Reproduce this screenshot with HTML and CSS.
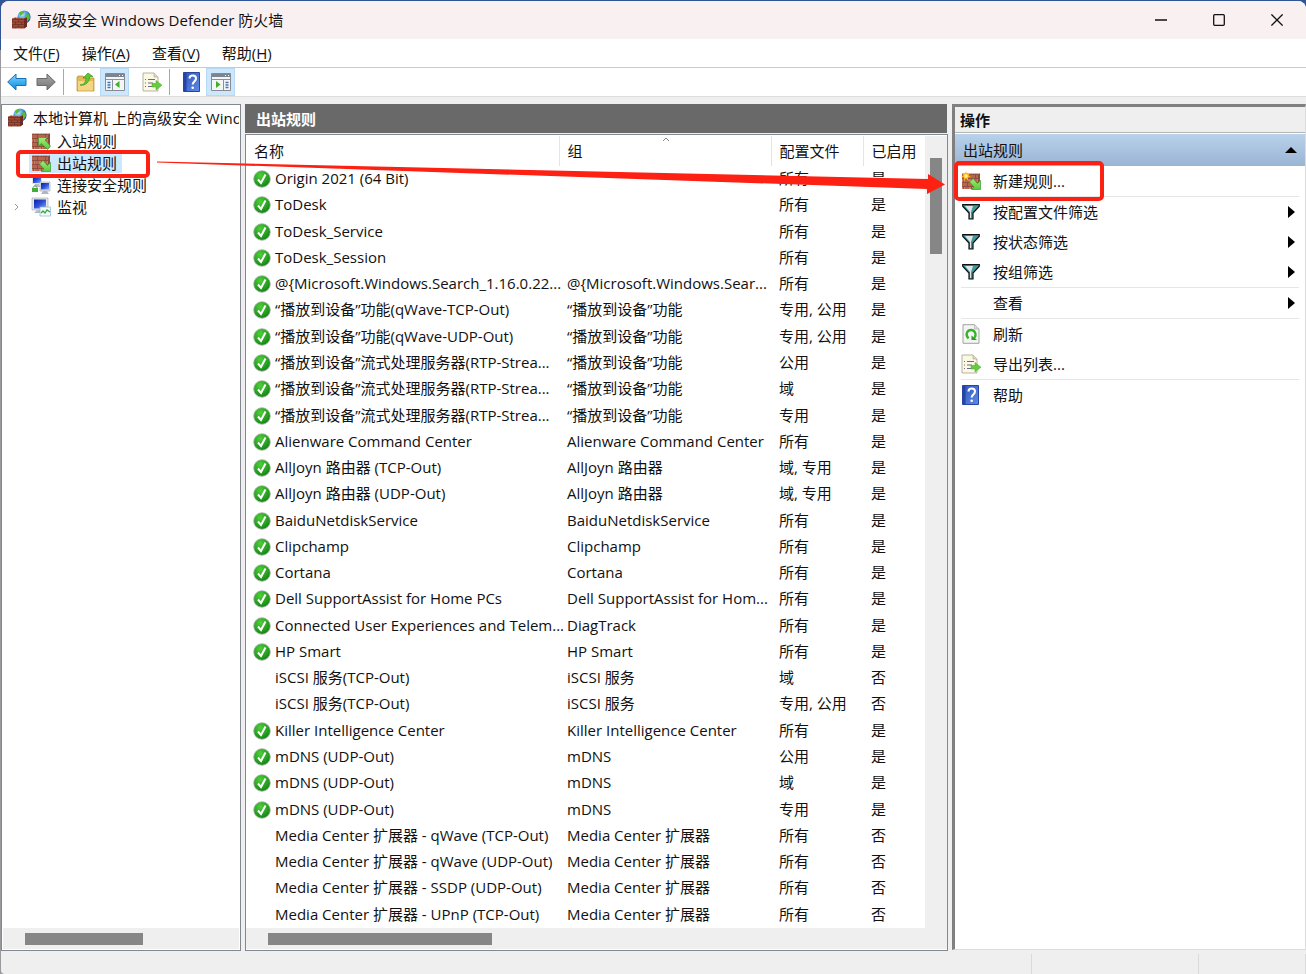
FILE: index.html
```html
<!DOCTYPE html>
<html lang="zh-CN">
<head>
<meta charset="utf-8">
<title>高级安全 Windows Defender 防火墙</title>
<link rel="stylesheet" href="styles.css">
</head>
<body>
<svg class="defs" aria-hidden="true">
  <defs>
    <linearGradient id="gBlue" x1="0" y1="0" x2="0" y2="1"><stop offset="0" stop-color="#8fd6fa"/><stop offset=".5" stop-color="#3db0f2"/><stop offset="1" stop-color="#1683d2"/></linearGradient>
    <linearGradient id="gGray" x1="0" y1="0" x2="0" y2="1"><stop offset="0" stop-color="#a8a8a8"/><stop offset="1" stop-color="#747474"/></linearGradient>
    <radialGradient id="gGlobe" cx=".35" cy=".3" r=".8"><stop offset="0" stop-color="#c9eefc"/><stop offset=".5" stop-color="#3b93dc"/><stop offset="1" stop-color="#123f96"/></radialGradient>
    <radialGradient id="gOk" cx=".4" cy=".3" r=".8"><stop offset="0" stop-color="#4fd03a"/><stop offset="1" stop-color="#0c7a10"/></radialGradient>
    <linearGradient id="gHelp" x1="0" y1="0" x2="1" y2="1"><stop offset="0" stop-color="#2f56be"/><stop offset="1" stop-color="#5f8ae6"/></linearGradient>
    <linearGradient id="gGreen" x1="0" y1="0" x2="0" y2="1"><stop offset="0" stop-color="#a4ec7c"/><stop offset="1" stop-color="#5cc63c"/></linearGradient>
    <linearGradient id="gScreen" x1="0" y1="0" x2="1" y2="1"><stop offset="0" stop-color="#0c1fa0"/><stop offset=".5" stop-color="#2c50d8"/><stop offset="1" stop-color="#8aaaf4"/></linearGradient>
    <pattern id="brick" width="8" height="8" patternUnits="userSpaceOnUse">
      <rect width="8" height="8" fill="#b4664f"/><rect width="4" height="4" fill="#cc8068"/><path d="M0 3.500h8M0 7.500h8M2.500 0v3.500M6.500 4v3.500" stroke="#8a4436" stroke-width=".8"/>
    </pattern>
    <pattern id="brickDark" width="6" height="5" patternUnits="userSpaceOnUse">
      <rect width="6" height="5" fill="#a04c38"/><path d="M0 2h6M0 4.500h6M1.500 0v2M4.500 2v2.500" stroke="#6a2c20" stroke-width=".7"/>
    </pattern>
  </defs>
  <symbol id="firewall" viewBox="0 0 20 20">
    <circle cx="13" cy="7" r="6.600" fill="url(#gGlobe)"/>
    <path d="M8 3c2-2 4-2 6-2l-2 3-3 2zM14 5l4-1 1 4-3 4-2-3z" fill="#5cba3e"/>
    <path d="M1 8.500l3-1 9 1 3-1v9l-3 2H1z" fill="url(#brickDark)"/><path d="M13 8.500l3-1v9l-3 2z" fill="#6c2c20"/>
  </symbol>
  <symbol id="wall" viewBox="0 0 20 20"><path d="M1 2.500h18v13l-2 2.500H1z" fill="url(#brick)"/><path d="M17 4l2-1.500v13L17 18z" fill="#8c4a3b"/></symbol>
  <symbol id="inbound" viewBox="0 0 20 20"><use href="#wall"/><path d="M7.500 6.500h9L14 9l5.500 6-3 3.500-6-6L7.500 15z" fill="url(#gGreen)" stroke="#3c9a28" stroke-width=".7"/></symbol>
  <symbol id="outbound" viewBox="0 0 20 20"><use href="#wall"/><path d="M19.500 18.500h-9l2.500-2.500-4.500-5L12 7.500l4.500 5 3-3z" fill="url(#gGreen)" stroke="#3c9a28" stroke-width=".7"/></symbol>
  <symbol id="newrule" viewBox="0 0 20 20"><use href="#outbound"/><path d="M5 0l1 3 3-1-1.500 2.500L10 6 7 6.500 7.500 10 5 7.500 2.500 10 3 6.500 0 6l2.500-1.500L1 2l3 1z" fill="#ffb61c"/><circle cx="5" cy="5" r="1.700" fill="#fff2a0"/></symbol>
  <symbol id="connsec" viewBox="0 0 20 20">
    <path d="M1 1h10v8H1z" fill="#dfe4ea"/><path d="M2 2h8v6H2z" fill="url(#gScreen)"/><path d="M4 9h4l1 3H3z" fill="#b4bcc4"/>
    <path d="M9 7h10v9H9z" fill="#dfe4ea" stroke="#9aa4b0" stroke-width=".6"/><path d="M10 8h8v6.500h-8z" fill="url(#gScreen)"/><path d="M12 16h4l2 3h-8z" fill="#aeb6be"/>
    <path d="M1 13h6v4H1z" fill="#45ae33"/><path d="M2 13c0-3 4-3 4 0" fill="none" stroke="#7a9a7a"/>
  </symbol>
  <symbol id="monitor" viewBox="0 0 20 20">
    <path d="M1 1h16v12H1z" fill="#e4e6ea" stroke="#a0a8b4" stroke-width=".6"/><path d="M3 2.500h12v9H3z" fill="url(#gScreen)"/><path d="M6 13h5l1 3H3z" fill="#b4bcc4"/>
    <path d="M9 10h10.500v9H9z" fill="#f2faff" stroke="#8db6c8" stroke-width=".7"/><path d="M10 16l2-2 2 2 2-3 3 2" fill="none" stroke="#35a83a" stroke-width="1.300"/>
  </symbol>
  <symbol id="back" viewBox="0 0 20 18"><path d="M.7 9L9 1v4.500h10v7H9V17z" fill="url(#gBlue)" stroke="#1673b4" stroke-linejoin="round"/></symbol>
  <symbol id="forward" viewBox="0 0 20 18"><path d="M19.300 9L11 1v4.500H1v7h10V17z" fill="url(#gGray)" stroke="#6b6b6b" stroke-linejoin="round"/></symbol>
  <symbol id="folder" viewBox="0 0 20 20"><path d="M1 5l1-1h5l2 2h9v13H1z" fill="#e3b955" stroke="#b88d35" stroke-width=".7"/><path d="M2 9h15v9.500H2z" fill="#f3d583"/><path d="M4 13c4 0 6-3 6-7H7l5-5 5 3.500-3.500.5c0 5-4 9-9.500 8z" fill="#5cc932" stroke="#2c8a18" stroke-width=".6"/></symbol>
  <symbol id="paneleft" viewBox="0 0 20 18"><path d="M.5.500h19v17H.5z" fill="#f4f5f7" stroke="#858b92"/><path d="M1 1h18v3H1z" fill="#7c858f"/><path d="M14 2.500h1m2 0h1" stroke="#fff"/><path d="M1 6.500h18" stroke="#8a929b"/><path d="M7.500 7v10" stroke="#8a929b"/><path d="M2.500 9.500h3m-3 2.500h3m-3 2.500h3" stroke="#3a73b4" stroke-width="1.300"/><path d="M14.500 8v7L10 11.500z" fill="#3eb127"/></symbol>
  <symbol id="paneright" viewBox="0 0 20 18"><path d="M.5.500h19v17H.5z" fill="#f4f5f7" stroke="#858b92"/><path d="M1 1h18v3H1z" fill="#7c858f"/><path d="M14 2.500h1m2 0h1" stroke="#fff"/><path d="M1 6.500h18" stroke="#8a929b"/><path d="M12.500 7v10" stroke="#8a929b"/><path d="M14.500 9.500h3m-3 2.500h3m-3 2.500h3" stroke="#4a78ac" stroke-width="1.300"/><path d="M5 8v7l4.500-3.500z" fill="#3eb127"/></symbol>
  <symbol id="export" viewBox="0 0 20 20"><path d="M1 1h11l4 4v14H1z" fill="#fbf8e4" stroke="#a5a18c" stroke-width=".8"/><path d="M12 1v4h4" fill="#dedac2" stroke="#a5a18c" stroke-width=".6"/><path d="M3 7.500h1m2 0h7M3 11h1m2 0h5M3 14.500h1m2 0h5" stroke="#6b6b88" stroke-width="1.200"/><path d="M10 11.500h4V8.500l6 4.700-6 4.800v-3h-4z" fill="#65cc40" stroke="#46a92b" stroke-width=".5"/></symbol>
  <symbol id="help" viewBox="0 0 18 20"><path d="M.5.500h16v19H.5z" fill="url(#gHelp)" stroke="#2746a2"/><path d="M1 1h2.500v18H1z" fill="#2545a4"/><path d="M6.500 6.500C6.500 2.500 13 2.500 13 6.500c0 3-3.300 3-3.300 6" fill="none" stroke="#fff" stroke-width="2"/><circle cx="9.700" cy="15.700" r="1.300" fill="#fff"/></symbol>
  <symbol id="refresh" viewBox="0 0 18 20"><path d="M1 .7h11.500L17 5v14.300H1z" fill="#f4f4f4" stroke="#999" stroke-width=".9"/><path d="M12.500.7V5H17" fill="#ddd" stroke="#aaa" stroke-width=".6"/><path d="M6.500 14.500c-4-4-1-8.500 2.500-8.500s6 4 3.500 8" fill="none" stroke="#38b42c" stroke-width="2.300"/><path d="M9.500 11.500v4.500H15z" fill="#279c20"/></symbol>
  <symbol id="funnel" viewBox="0 0 18 16"><path d="M.7.700h16.600v1.500L11 9v6H7V9L.7 2.200z" fill="#3f9a9e" stroke="#111" stroke-width="1.200"/><path d="M3 2h8L9 8v6H8V8z" fill="#e2e6e6"/></symbol>
  <symbol id="ok" viewBox="0 0 18 18"><circle cx="9" cy="9" r="8.300" fill="url(#gOk)" stroke="#a6b3a3" stroke-width=".8"/><path d="M5 9.500l3 3.500 4.500-8.500" fill="none" stroke="#fff" stroke-width="2"/></symbol>
</svg>

<div class="window">
  <header class="titlebar">
    <svg class="i20"><use href="#firewall"/></svg>
    <h1>高级安全 Windows Defender 防火墙</h1>
    <div class="caption">
      <button aria-label="最小化"><svg viewBox="0 0 12 12"><path d="M0 6h12"/></svg></button>
      <button aria-label="最大化"><svg viewBox="0 0 12 12"><rect x=".7" y=".7" width="10.600" height="10.600" rx="1"/></svg></button>
      <button aria-label="关闭"><svg viewBox="0 0 12 12"><path d="M.4.400l11.200 11.200M11.600.400L.4 11.600"/></svg></button>
    </div>
  </header>
  <nav class="menubar">
    <button>文件(<u>F</u>)</button><button>操作(<u>A</u>)</button><button>查看(<u>V</u>)</button><button>帮助(<u>H</u>)</button>
  </nav>
  <div class="toolbar">
    <button aria-label="后退"><svg><use href="#back"/></svg></button>
    <button aria-label="前进"><svg><use href="#forward"/></svg></button>
    <span class="vsep"></span>
    <button aria-label="上一级"><svg><use href="#folder"/></svg></button>
    <button class="on" aria-label="显示控制台树"><svg><use href="#paneleft"/></svg></button>
    <button class="gap" aria-label="导出列表"><svg><use href="#export"/></svg></button>
    <span class="vsep"></span>
    <button aria-label="帮助"><svg><use href="#help"/></svg></button>
    <button class="on" aria-label="显示操作窗格"><svg><use href="#paneright"/></svg></button>
  </div>

  <main class="panes">
    <section class="tree">
      <ul>
        <li class="root"><svg class="i20"><use href="#firewall"/></svg><span>本地计算机 上的高级安全 Wind</span></li>
        <li><svg class="i20"><use href="#inbound"/></svg><span>入站规则</span></li>
        <li class="selected"><svg class="i20"><use href="#outbound"/></svg><span>出站规则</span><i class="mark"></i></li>
        <li><svg class="i20"><use href="#connsec"/></svg><span>连接安全规则</span></li>
        <li><svg class="twist" viewBox="0 0 6 8"><path d="M1 1l3 3-3 3"/></svg><svg class="i20"><use href="#monitor"/></svg><span>监视</span></li>
      </ul>
      <div class="hbar"><div class="thumb"></div></div>
    </section>

    <section class="results">
      <h2>出站规则</h2>
      <div class="list">
        <div class="rows">
        <table>
          <colgroup><col><col class="c-group"><col class="c-profile"><col class="c-on"></colgroup>
          <thead><tr><th>名称</th><th>组<svg class="sort" viewBox="0 0 8 5"><path d="M1 4l3-3 3 3"/></svg></th><th>配置文件</th><th>已启用</th></tr></thead>
          <tbody>
          <tr><td><svg><use href="#ok"/></svg>Origin 2021 (64 Bit)</td><td></td><td>所有</td><td>是</td></tr>
          <tr><td><svg><use href="#ok"/></svg>ToDesk</td><td></td><td>所有</td><td>是</td></tr>
          <tr><td><svg><use href="#ok"/></svg>ToDesk_Service</td><td></td><td>所有</td><td>是</td></tr>
          <tr><td><svg><use href="#ok"/></svg>ToDesk_Session</td><td></td><td>所有</td><td>是</td></tr>
          <tr><td><svg><use href="#ok"/></svg>@{Microsoft.Windows.Search_1.16.0.22...</td><td>@{Microsoft.Windows.Sear...</td><td>所有</td><td>是</td></tr>
          <tr><td><svg><use href="#ok"/></svg>“播放到设备”功能(qWave-TCP-Out)</td><td>“播放到设备”功能</td><td>专用, 公用</td><td>是</td></tr>
          <tr><td><svg><use href="#ok"/></svg>“播放到设备”功能(qWave-UDP-Out)</td><td>“播放到设备”功能</td><td>专用, 公用</td><td>是</td></tr>
          <tr><td><svg><use href="#ok"/></svg>“播放到设备”流式处理服务器(RTP-Strea...</td><td>“播放到设备”功能</td><td>公用</td><td>是</td></tr>
          <tr><td><svg><use href="#ok"/></svg>“播放到设备”流式处理服务器(RTP-Strea...</td><td>“播放到设备”功能</td><td>域</td><td>是</td></tr>
          <tr><td><svg><use href="#ok"/></svg>“播放到设备”流式处理服务器(RTP-Strea...</td><td>“播放到设备”功能</td><td>专用</td><td>是</td></tr>
          <tr><td><svg><use href="#ok"/></svg>Alienware Command Center</td><td>Alienware Command Center</td><td>所有</td><td>是</td></tr>
          <tr><td><svg><use href="#ok"/></svg>AllJoyn 路由器 (TCP-Out)</td><td>AllJoyn 路由器</td><td>域, 专用</td><td>是</td></tr>
          <tr><td><svg><use href="#ok"/></svg>AllJoyn 路由器 (UDP-Out)</td><td>AllJoyn 路由器</td><td>域, 专用</td><td>是</td></tr>
          <tr><td><svg><use href="#ok"/></svg>BaiduNetdiskService</td><td>BaiduNetdiskService</td><td>所有</td><td>是</td></tr>
          <tr><td><svg><use href="#ok"/></svg>Clipchamp</td><td>Clipchamp</td><td>所有</td><td>是</td></tr>
          <tr><td><svg><use href="#ok"/></svg>Cortana</td><td>Cortana</td><td>所有</td><td>是</td></tr>
          <tr><td><svg><use href="#ok"/></svg>Dell SupportAssist for Home PCs</td><td>Dell SupportAssist for Hom...</td><td>所有</td><td>是</td></tr>
          <tr><td><svg><use href="#ok"/></svg>Connected User Experiences and Telem...</td><td>DiagTrack</td><td>所有</td><td>是</td></tr>
          <tr><td><svg><use href="#ok"/></svg>HP Smart</td><td>HP Smart</td><td>所有</td><td>是</td></tr>
          <tr><td class="off">iSCSI 服务(TCP-Out)</td><td>iSCSI 服务</td><td>域</td><td>否</td></tr>
          <tr><td class="off">iSCSI 服务(TCP-Out)</td><td>iSCSI 服务</td><td>专用, 公用</td><td>否</td></tr>
          <tr><td><svg><use href="#ok"/></svg>Killer Intelligence Center</td><td>Killer Intelligence Center</td><td>所有</td><td>是</td></tr>
          <tr><td><svg><use href="#ok"/></svg>mDNS (UDP-Out)</td><td>mDNS</td><td>公用</td><td>是</td></tr>
          <tr><td><svg><use href="#ok"/></svg>mDNS (UDP-Out)</td><td>mDNS</td><td>域</td><td>是</td></tr>
          <tr><td><svg><use href="#ok"/></svg>mDNS (UDP-Out)</td><td>mDNS</td><td>专用</td><td>是</td></tr>
          <tr><td class="off">Media Center 扩展器 - qWave (TCP-Out)</td><td>Media Center 扩展器</td><td>所有</td><td>否</td></tr>
          <tr><td class="off">Media Center 扩展器 - qWave (UDP-Out)</td><td>Media Center 扩展器</td><td>所有</td><td>否</td></tr>
          <tr><td class="off">Media Center 扩展器 - SSDP (UDP-Out)</td><td>Media Center 扩展器</td><td>所有</td><td>否</td></tr>
          <tr><td class="off">Media Center 扩展器 - UPnP (TCP-Out)</td><td>Media Center 扩展器</td><td>所有</td><td>否</td></tr>
          </tbody>
        </table>
        </div>
        <div class="vbar"><div class="thumb"></div></div>
        <div class="hbar"><div class="thumb"></div></div>
      </div>
      <svg class="arrow" viewBox="0 0 788 50" preserveAspectRatio="none"><path d="M0 4.500L771 22V17L788 27.500 770 37V32L0 5.500z"/></svg>
    </section>

    <aside class="actions">
      <h2>操作</h2>
      <button class="group">出站规则<svg viewBox="0 0 12 6"><path d="M0 6l6-6 6 6z"/></svg></button>
      <div class="items">
        <button><svg class="i20"><use href="#newrule"/></svg><span>新建规则...</span><i class="mark"></i></button>
        <hr>
        <button><svg class="i20 fun"><use href="#funnel"/></svg><span>按配置文件筛选</span><svg class="more" viewBox="0 0 7 12"><path d="M0 0l7 6-7 6z"/></svg></button>
        <button><svg class="i20 fun"><use href="#funnel"/></svg><span>按状态筛选</span><svg class="more" viewBox="0 0 7 12"><path d="M0 0l7 6-7 6z"/></svg></button>
        <button><svg class="i20 fun"><use href="#funnel"/></svg><span>按组筛选</span><svg class="more" viewBox="0 0 7 12"><path d="M0 0l7 6-7 6z"/></svg></button>
        <hr>
        <button><svg class="i20"></svg><span>查看</span><svg class="more" viewBox="0 0 7 12"><path d="M0 0l7 6-7 6z"/></svg></button>
        <hr>
        <button><svg class="i20"><use href="#refresh"/></svg><span>刷新</span></button>
        <button><svg class="i20"><use href="#export"/></svg><span>导出列表...</span></button>
        <hr>
        <button><svg class="i20"><use href="#help"/></svg><span>帮助</span></button>
      </div>
    </aside>
  </main>
  <footer class="status"><span></span><span></span><span></span></footer>
</div>
</body>
</html>
```
FILE: styles.css
```css
* { box-sizing: border-box; }
body {
  margin: 0;
  height: 100vh;
  padding: 1px 0 0 1px;
  background: linear-gradient(#2f5596 0, #2f5596 50px, #9a9a9e 50px);
  font: 15px/20px "Open Sans", "Noto Sans CJK SC", sans-serif;
  color: #111;
  overflow: hidden;
}
button {
  border: 0;
  padding: 0;
  background: none;
  color: inherit;
  font: inherit;
  text-align: left;
}
h1, h2, ul { margin: 0; padding: 0; font: inherit; list-style: none; }
.defs { position: absolute; width: 0; height: 0; }
.i20 { width: 20px; height: 20px; flex: none; }

.window {
  height: 100%;
  display: flex;
  flex-direction: column;
  background: #efefef;
  border-radius: 8px 8px 0 4px;
  overflow: hidden;
}
.titlebar {
  display: flex;
  align-items: center;
  height: 38px;
  flex: none;
  padding-left: 10px;
  gap: 6px;
  background: #f9f0f1;
}
.titlebar h1 { flex: 1; }
.caption { display: flex; }
.caption button { width: 58px; height: 38px; display: grid; place-items: center; }
.caption svg { width: 12px; height: 12px; fill: none; stroke: #111; stroke-width: 1.3; }

.menubar {
  display: flex;
  gap: 22px;
  height: 29px;
  flex: none;
  padding: 0 12px;
  background: #fff;
  border-bottom: 1px solid #c4ccd2;
}
.menubar button { white-space: nowrap; }
.menubar u { text-underline-offset: 2px; }

.toolbar {
  display: flex;
  align-items: center;
  height: 29px;
  flex: none;
  padding-left: 1px;
  background: #fff;
  border-bottom: 1px solid #dedede;
}
.toolbar button { width: 29px; height: 28px; display: grid; place-items: center; }
.toolbar svg { width: 20px; height: 20px; }
.toolbar .on { background: #cce6fb; border: 1px solid #b6daf6; }
.toolbar .gap { margin-left: 8px; }
.vsep { width: 1px; height: 26px; margin: 0 3px; background: #a8a8a8; }
.vsep + button { margin-left: 4px; }

.panes {
  flex: 1;
  min-height: 0;
  display: grid;
  grid-template-columns: 240px minmax(0, 1fr) 354px;
  gap: 4px;
  padding-top: 7px;
}
.tree, .list { border: 1px solid #828790; background: #fff; }
.tree { display: flex; flex-direction: column; padding: 1px; min-height: 0; }
.tree ul { flex: 1; }
.tree li {
  position: relative;
  display: flex;
  align-items: center;
  height: 22px;
  padding-left: 28px;
  gap: 2px;
  white-space: nowrap;
}
.tree li.root { height: 24px; padding-left: 4px; overflow: hidden; }
.tree li span { padding: 0 4px; height: 22px; line-height: 22px; }
.selected::before { content: ""; position: absolute; left: 26px; width: 93px; height: 20px; background: #cce8ff; }
.selected svg, .selected span { position: relative; }
.twist { position: absolute; left: 11px; width: 6px; height: 8px; fill: none; stroke: #999; }
.mark { position: absolute; border: 4px solid #fd2113; border-radius: 5px; z-index: 2; }
.tree .mark { left: 13px; top: -2px; width: 134px; height: 28px; }
.hbar { height: 21px; background: #efefef; display: flex; align-items: center; }
.thumb { background: #868686; }
.hbar .thumb { height: 12px; width: 224px; margin-left: 22px; }
.tree .hbar .thumb { width: 118px; }

.results { display: flex; flex-direction: column; min-height: 0; position: relative; }
.results h2 {
  height: 29px;
  line-height: 30px;
  padding-left: 11px;
  margin-right: 1px;
  background: #696969;
  color: #fff;
  font-weight: bold;
}
.list {
  flex: 1;
  min-height: 0;
  margin-top: 1px;
  padding: 1px 0;
  display: grid;
  grid-template-columns: minmax(0, 1fr) 22px;
  grid-template-rows: minmax(0, 1fr) 21px;
}
.rows { min-height: 0; overflow: hidden; }
table { width: 100%; height: 100%; table-layout: fixed; border-collapse: collapse; }
.c-group { width: 212px; }
.c-profile { width: 92px; }
.c-on { width: 62px; }
th, td { padding: 0 0 0 8px; text-align: left; font-weight: normal; white-space: nowrap; }
thead tr { height: 30px; }
td { padding-bottom: 2px; }
th { position: relative; border-right: 1px solid #e5e5e5; }
th:last-child { border-right: 0; }
.sort { position: absolute; left: 102px; top: 1px; width: 8px; height: 5px; fill: none; stroke: #888; }
td:first-child { padding-left: 7px; }
td svg { width: 18px; height: 18px; margin-right: 4px; vertical-align: -4px; }
td.off:first-child { padding-left: 29px; }
.vbar { background: #efefef; padding: 22px 5px 0; }
.vbar .thumb { height: 96px; width: 12px; }
.list .hbar { grid-column: 1 / 3; }
.arrow { position: absolute; left: -88px; top: 53px; width: calc(100% + 85px); height: 50px; z-index: 3; fill: #fd2113; pointer-events: none; }

.actions {
  border: 1px solid #dcdcdc;
  border-top: 3px solid #808080;
  border-left: 3px solid #808080;
  margin-bottom: 1px;
  background: #fff;
}
.actions h2 {
  height: 26px;
  line-height: 27px;
  padding-left: 5px;
  background: #efefef;
  border-bottom: 1px solid #b4b4b4;
  font-weight: bold;
}
.group {
  display: flex;
  align-items: center;
  justify-content: space-between;
  width: 100%;
  height: 33px;
  padding: 0 8px;
  border-top: 1px solid #fff;
  background: linear-gradient(#b9d1ea, #9ab4d4);
}
.group svg { width: 12px; height: 6px; }
.items { padding: 0 6px; }
.items button { position: relative; display: flex; align-items: center; width: 100%; height: 30px; }
.items span { flex: 1; padding-left: 12px; }
.items hr { height: 1px; margin: 0; border: 0; background: #e6e6e6; }
.items .fun { height: 16px; }
.more { width: 7px; height: 12px; margin-right: 4px; }
.items .mark { left: -7px; top: -5px; width: 150px; height: 40px; }

.status { display: flex; justify-content: flex-end; height: 23px; flex: none; padding-top: 3px; }
.status span { border-right: 1px solid #dadada; width: 107px; }
.status span:nth-child(2) { width: 167px; }
```
